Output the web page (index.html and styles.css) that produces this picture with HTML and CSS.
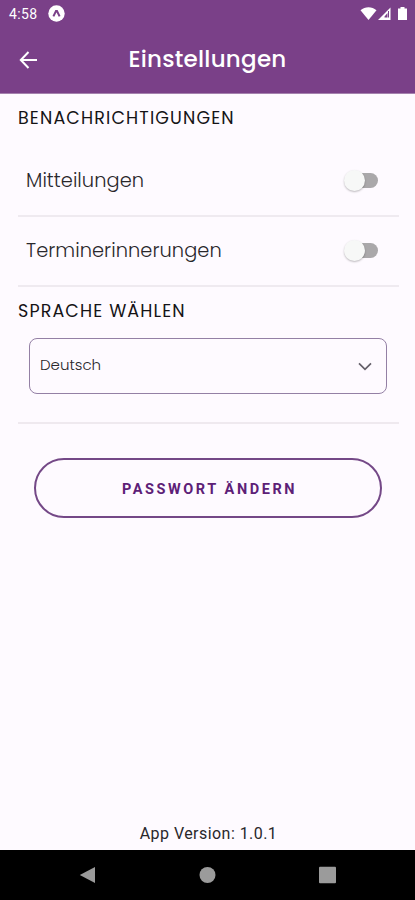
FILE: index.html
```html
<!DOCTYPE html>
<html lang="de">
<head>
<meta charset="utf-8">
<title>Einstellungen</title>
<link rel="stylesheet" href="styles.css">
</head>
<body>
<div class="screen">
  <header class="top">
    <div class="status">
      <span class="clock">4:58</span>
      <svg class="app-dot" width="17" height="17" viewBox="0 0 17 17"><circle cx="8.5" cy="8.5" r="8.2" fill="#fff"/><path d="M5.400 11.400 8 6h1l2.600 5.400" fill="none" stroke="#7a4088" stroke-width="2"/></svg>
      <svg class="signals" width="48" height="16" viewBox="0 0 48 16" fill="#fff"><path d="M.5 4.2C5.2.2 11.8.2 16.500 4.200L8.500 14Z"/><path d="M18 14 30.500 1.500V14Z"/><path d="M24.500 10.500 27.500 7v4.500h-3Z M28 5h1v6.500h-1Z" fill="#7a4088"/><path d="M40.500 1h4v1.500H47V14h-9V2.500h2.500Z"/></svg>
    </div>
    <div class="appbar">
      <svg class="back" width="18" height="18" viewBox="0 0 18 18" fill="none" stroke="#fff" stroke-width="2"><path d="M18 9H2M9.500 1 1.800 9l7.700 8"/></svg>
      <h1>Einstellungen</h1>
    </div>
  </header>
  <main>
    <h2 class="h-notify">BENACHRICHTIGUNGEN</h2>
    <div class="row first"><span class="label">Mitteilungen</span><span class="switch"></span></div>
    <div class="row"><span class="label">Terminerinnerungen</span><span class="switch"></span></div>
    <h2 class="h-lang">SPRACHE WÄHLEN</h2>
    <div class="language">
      <div class="select"><span class="value">Deutsch</span><svg width="14" height="9" viewBox="0 0 14 9" fill="none" stroke="#65606a" stroke-width="1.700"><path d="m1 1.300 6 6 6-6"/></svg></div>
    </div>
    <button class="password">PASSWORT ÄNDERN</button>
    <p class="version">App Version: 1.0.1</p>
  </main>
  <nav>
    <svg width="17" height="18" viewBox="0 0 17 18"><path d="M16 1v16L.8 9Z"/></svg>
    <svg width="17" height="18" viewBox="0 0 17 18"><circle cx="8.500" cy="9" r="8"/></svg>
    <svg width="17" height="18" viewBox="0 0 17 18"><rect y=".7" width="17" height="16.600" rx="1"/></svg>
  </nav>
</div>
</body>
</html>
```
FILE: styles.css
```css
* { box-sizing: border-box; }
body { margin: 0; background: #fefaff; color: #29272b; font-family: Poppins, Inter, sans-serif; }
.screen { width: 415px; height: 900px; display: flex; flex-direction: column; }
.top { height: 94px; flex: none; background: #7a4088; color: #fff; border-bottom: 1px solid #a581ae; }
.status { height: 27px; display: flex; align-items: center; padding: 0 7px 0 9px; }
.clock { font: 14px/27px Roboto, sans-serif; width: 39px; padding-top: 1px; letter-spacing: .4px; }
.signals { margin-left: auto; }
.appbar { height: 66px; display: grid; grid-template-columns: 40px 1fr 40px; align-items: center; }
.back { margin-left: 19px; }
h1 { margin: -2px 0 0; text-align: center; font-size: 23px; line-height: 30px; font-weight: 500; letter-spacing: .25px; }
main { flex: 1; display: flex; flex-direction: column; padding: 0 16px 0 18px; }
h2 { margin: 0; font-size: 17.5px; font-weight: 400; color: #151316; line-height: 24px; white-space: nowrap; letter-spacing: 1.13px; }
.h-notify { margin-top: 12px; }
.row { height: 70px; display: flex; align-items: center; justify-content: space-between; padding: 0 21px 0 8px; border-bottom: 2px solid #efeaf0; font-size: 19.4px; font-weight: 300; }
.label { margin-top: -2px; letter-spacing: .05px; }
.first { height: 71px; margin-top: 16px; }
.first .label { margin-top: -1px; }
.switch { width: 34px; height: 22px; display: flex; align-items: center; position: relative; margin-top: -1px; }
.switch::before { content: ""; width: 29px; height: 15px; margin-left: 5px; border-radius: 8px; background: #aaa8aa; }
.first .switch { margin-top: 0; }
.switch::after { content: ""; position: absolute; left: 0; top: 0; width: 21px; height: 21px; border-radius: 50%; background: #f7f8f7; box-shadow: 0 1px 2px #0004; }
.h-lang { margin-top: 12px; }
.language { height: 101px; padding: 15px 12px 0 11px; border-bottom: 2px solid #efe9ef; }
.select { height: 56px; border: 1px solid #9480a5; border-radius: 8px; display: flex; align-items: center; justify-content: space-between; padding: 0 14px 0 10px; font-size: 15px; font-weight: 300; }
.value { margin-top: -3px; }
.password { height: 60px; margin: 34px 17px 0 16px; border: 2px solid #744887; border-radius: 30px; background: transparent; color: #5d2077; font: 700 14.5px Roboto, sans-serif; letter-spacing: 2.57px; padding: 2px 0 0 3px; }
.version { margin: auto 0 4px; text-align: center; font: 16px/24px Roboto, sans-serif; letter-spacing: .45px; }
nav { height: 50px; flex: none; background: #000; display: flex; justify-content: space-between; align-items: center; padding: 0 79px; fill: #9b9b9b; }
```
